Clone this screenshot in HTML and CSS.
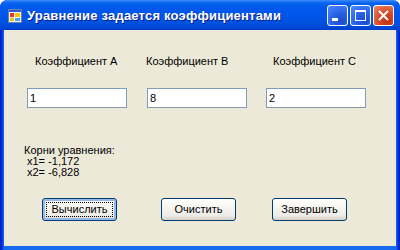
FILE: index.html
```html
<!DOCTYPE html>
<html lang="ru">

<head>
    <meta charset="UTF-8">
    <title>Уравнение задается коэффициентами</title>
    <link rel="stylesheet" href="styles.css">
</head>

<body>
    <div class="window">
        <div class="titlebar">
            <svg class="app-icon" width="14" height="14" viewBox="0 0 14 14">
                <rect x="0.5" y="0.5" width="13" height="13" fill="#f4f4f4" stroke="#6b7fa8" />
                <rect x="1" y="1" width="12" height="2" fill="#2a5bd6" />
                <rect x="2" y="4" width="4" height="4" fill="#e23a2a" />
                <rect x="7" y="4" width="5" height="4" fill="#f5c400" />
                <rect x="2" y="9" width="4" height="3" fill="#f5c400" />
                <rect x="7" y="9" width="5" height="3" fill="#49a3e8" />
            </svg>
            <span class="title">Уравнение задается коэффициентами</span>
            <div class="caption-buttons">
                <div class="cap-btn">
                    <svg width="21" height="21" viewBox="0 0 21 21"><rect x="5" y="13" width="6" height="3" fill="#fff" /></svg>
                </div>
                <div class="cap-btn">
                    <svg width="21" height="21" viewBox="0 0 21 21"><rect x="5.5" y="5.5" width="10" height="10" fill="none" stroke="#fff" /><rect x="5" y="5" width="11" height="2" fill="#fff" /></svg>
                </div>
                <div class="cap-btn close">
                    <svg width="21" height="21" viewBox="0 0 21 21"><path d="M6 6 L15 15 M15 6 L6 15" stroke="#fff" stroke-width="2" /></svg>
                </div>
            </div>
        </div>

        <div class="client">
            <div class="coefs">
                <div class="coef first">
                    <span class="label">Коэффициент A</span>
                    <div class="textbox">1</div>
                </div>
                <div class="coef second">
                    <span class="label">Коэффициент B</span>
                    <div class="textbox">8</div>
                </div>
                <div class="coef third">
                    <span class="label">Коэффициент C</span>
                    <div class="textbox">2</div>
                </div>
            </div>

            <div class="roots">
                <div>Корни уравнения:</div>
                <div class="root">x1= -1,172</div>
                <div class="root">x2= -6,828</div>
            </div>

            <div class="actions">
                <div class="btn focused"><span>Вычислить</span></div>
                <div class="btn">Очистить</div>
                <div class="btn">Завершить</div>
            </div>
        </div>
    </div>
</body>

</html>
```

FILE: styles.css
```css
* {
    margin: 0;
    padding: 0;
    box-sizing: border-box;
}

body {
    width: 400px;
    height: 250px;
    background-color: #fff;
    font-family: "Liberation Sans", Arial, sans-serif;
    font-size: 11px;
    color: #000;
    overflow: hidden;
}

.window {
    width: 400px;
    height: 250px;
    display: flex;
    flex-direction: column;
    border-radius: 7px 7px 0 0;
    background: linear-gradient(to right, #0019cf 0, #0831d9 2px, #166aee 4px, #166aee 396px, #0831d9 398px, #0019cf 400px);
    padding: 0 4px 4px;
    overflow: hidden;
}

.titlebar {
    height: 30px;
    margin: 0 -4px;
    padding: 0 6px 0 8px;
    display: flex;
    align-items: center;
    border-radius: 7px 7px 0 0;
    background: linear-gradient(to bottom, #3d8cf7 0, #0a62f0 3px, #0058ee 8px, #0056e8 16px, #0050de 24px, #0046d4 28px, #003cc8 30px);
}

.app-icon {
    flex: none;
    margin-top: 1px;
}

.title {
    margin-left: 5px;
    color: #fff;
    font-weight: bold;
    font-size: 13px;
    letter-spacing: 0.2px;
    text-shadow: 1px 1px 0 #0a1e8a;
    white-space: nowrap;
}

.caption-buttons {
    margin-left: auto;
    display: flex;
    gap: 2px;
    margin-top: 1px;
}

.cap-btn {
    width: 21px;
    height: 21px;
    border: 1px solid #fff;
    border-radius: 3px;
    background: radial-gradient(circle at 70% 80%, #1b4ccc 0, #2a63e6 45%, #4d8aff 100%);
    display: flex;
    align-items: center;
    justify-content: center;
}

.cap-btn svg {
    margin: -1px;
}

.cap-btn.close {
    background: radial-gradient(circle at 70% 80%, #c2300e 0, #d94c2a 45%, #ed8a6c 100%);
}

.client {
    flex: 1;
    background-color: #ece9d8;
    display: flex;
    flex-direction: column;
}

.coefs {
    display: flex;
    padding-top: 25px;
}

.coef {
    display: flex;
    flex-direction: column;
    gap: 20px;
    width: 100px;
}

.coef.first {
    margin-left: 23px;
}

.coef.second {
    margin-left: 20px;
}

.coef.third {
    margin-left: 19px;
}

.first .label {
    padding-left: 8px;
}

.second .label {
    padding-left: 0;
    margin-left: -1px;
}

.third .label {
    padding-left: 7px;
}

.label {
    line-height: 13px;
    white-space: nowrap;
}

.textbox {
    width: 100px;
    height: 20px;
    border: 1px solid #7f9db9;
    background-color: #fff;
    padding: 3px 2px 0;
    line-height: 13px;
}

.roots {
    margin-top: 37px;
    padding-left: 20px;
    line-height: 11px;
}

.root {
    padding-left: 3px;
}

.actions {
    display: flex;
    margin-top: 20px;
    padding-left: 38px;
}

.btn {
    width: 75px;
    height: 23px;
    border: 1px solid #003c74;
    border-radius: 3px;
    background: linear-gradient(to bottom, #fff 0, #f6f5f0 40%, #ecebe6 80%, #d6d0c5 100%);
    display: flex;
    align-items: center;
    justify-content: center;
    line-height: 13px;
}

.btn:nth-child(2) {
    margin-left: 44px;
}

.btn:nth-child(3) {
    margin-left: 36px;
}

.btn.focused {
    box-shadow: inset 0 0 0 2px #98b8ea;
}

.btn.focused span {
    width: 67px;
    height: 15px;
    border: 1px dotted #000;
    display: flex;
    align-items: center;
    justify-content: center;
}
```
